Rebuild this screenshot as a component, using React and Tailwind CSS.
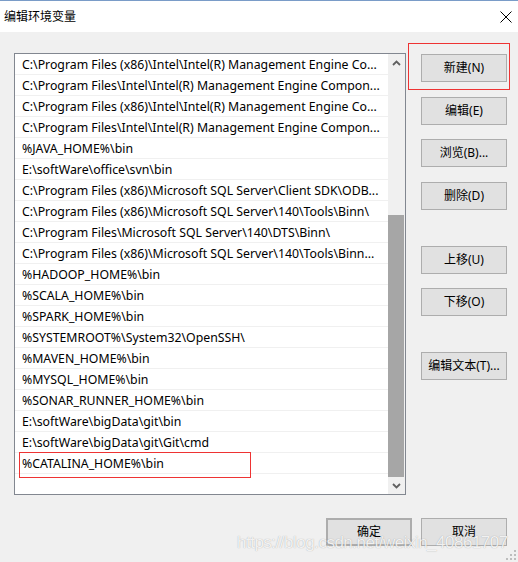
import React from 'react';

const paths = [
  'C:\\Program Files (x86)\\Intel\\Intel(R) Management Engine Co...',
  'C:\\Program Files\\Intel\\Intel(R) Management Engine Compon...',
  'C:\\Program Files (x86)\\Intel\\Intel(R) Management Engine Co...',
  'C:\\Program Files\\Intel\\Intel(R) Management Engine Compon...',
  '%JAVA_HOME%\\bin',
  'E:\\softWare\\office\\svn\\bin',
  'C:\\Program Files (x86)\\Microsoft SQL Server\\Client SDK\\ODB...',
  'C:\\Program Files (x86)\\Microsoft SQL Server\\140\\Tools\\Binn\\',
  'C:\\Program Files\\Microsoft SQL Server\\140\\DTS\\Binn\\',
  'C:\\Program Files (x86)\\Microsoft SQL Server\\140\\Tools\\Binn...',
  '%HADOOP_HOME%\\bin',
  '%SCALA_HOME%\\bin',
  '%SPARK_HOME%\\bin',
  '%SYSTEMROOT%\\System32\\OpenSSH\\',
  '%MAVEN_HOME%\\bin',
  '%MYSQL_HOME%\\bin',
  '%SONAR_RUNNER_HOME%\\bin',
  'E:\\softWare\\bigData\\git\\bin',
  'E:\\softWare\\bigData\\git\\Git\\cmd',
  '%CATALINA_HOME%\\bin',
];

const font = { fontFamily: '"Segoe UI", "Noto Sans", "Noto Sans CJK SC", sans-serif' };

function Btn({ children, className = '' }) {
  return (
    <div
      className={`w-[86px] h-[28px] flex items-center justify-center bg-[#e1e1e1] border border-[#adadad] text-[12px] text-black ${className}`}
    >
      {children}
    </div>
  );
}

function Chevron({ up }) {
  return (
    <svg width="9" height="6" viewBox="0 0 9 6" className={up ? '' : 'rotate-180'}>
      <path d="M1 5 L4.5 1.5 L8 5" fill="none" stroke="#606060" strokeWidth="1.8" />
    </svg>
  );
}

export default function App() {
  return (
    <div
      className="relative w-[518px] h-[562px] flex flex-col bg-[#f0f0f0] overflow-hidden"
      style={font}
    >
      {/* title bar */}
      <div className="h-[32px] bg-white border-t border-[#7a9cc8] flex items-center justify-between pl-[4px] pr-[6px]">
        <span className="text-[12px] text-black leading-none">编辑环境变量</span>
        <svg width="12" height="12" viewBox="0 0 12 12">
          <path d="M0.5 0.5 L11.5 11.5 M11.5 0.5 L0.5 11.5" stroke="#000" strokeWidth="1" />
        </svg>
      </div>

      <div className="flex-1 flex flex-col">
        <div className="flex pl-[14px] pt-[21px]">
          {/* list box */}
          <div className="w-[392px] h-[442px] border border-[#828790] bg-white flex">
            <div className="w-[373px] flex flex-col">
              {paths.map((p, i) => (
                <div
                  key={i}
                  className="h-[21px] border-b border-[#f0f0f0] pl-[7px] pt-[3px] flex items-center text-[12.3px] text-black whitespace-nowrap overflow-hidden"
                >
                  {p}
                </div>
              ))}
            </div>
            {/* scrollbar */}
            <div className="w-[17px] bg-[#f0f0f0] flex flex-col">
              <div className="h-[17px] flex items-center justify-center">
                <Chevron up />
              </div>
              <div className="h-[144px]" />
              <div className="h-[262px] mr-[1px] bg-[#a6a6a6]" />
              <div className="flex-1 flex items-center justify-center">
                <Chevron />
              </div>
            </div>
          </div>

          {/* buttons */}
          <div className="flex flex-col ml-[15px] pt-[1px]">
            <Btn>新建(N)</Btn>
            <Btn className="mt-[15px]">编辑(E)</Btn>
            <Btn className="mt-[14px]">浏览(B)...</Btn>
            <Btn className="mt-[15px]">删除(D)</Btn>
            <Btn className="mt-[36px]">上移(U)</Btn>
            <Btn className="mt-[14px]">下移(O)</Btn>
            <Btn className="mt-[36px]">编辑文本(T)...</Btn>
          </div>
        </div>

        <div className="flex justify-end gap-[9px] pr-[11px] mt-[23px]">
          <Btn className="border-2 border-[#0078d7]">确定</Btn>
          <Btn>取消</Btn>
        </div>
      </div>

      {/* annotation boxes */}
      <div className="absolute left-[408px] top-[43px] w-[102px] h-[47px] border border-[#ee3333]" />
      <div className="absolute left-[19px] top-[452px] w-[232px] h-[26px] border border-[#ee3333]" />

      {/* watermark */}
      <div
        className="absolute left-[237px] top-[534px] text-[17px] tracking-[-0.5px] text-white/85 whitespace-nowrap leading-none"
        style={{ fontFamily: '"Liberation Sans", Arial, sans-serif', textShadow: '0 0 1px rgba(0,0,0,0.35)' }}
      >
        https://blog.csdn.net/weixin_40861707
      </div>

      {/* resize grip */}
      <svg className="absolute right-[2px] bottom-[2px]" width="10" height="10" viewBox="0 0 10 10">
        <rect x="8" y="0" width="2" height="2" fill="#bdbdbd" />
        <rect x="4" y="4" width="2" height="2" fill="#bdbdbd" />
        <rect x="8" y="4" width="2" height="2" fill="#bdbdbd" />
        <rect x="0" y="8" width="2" height="2" fill="#bdbdbd" />
        <rect x="4" y="8" width="2" height="2" fill="#bdbdbd" />
        <rect x="8" y="8" width="2" height="2" fill="#bdbdbd" />
      </svg>
    </div>
  );
}
